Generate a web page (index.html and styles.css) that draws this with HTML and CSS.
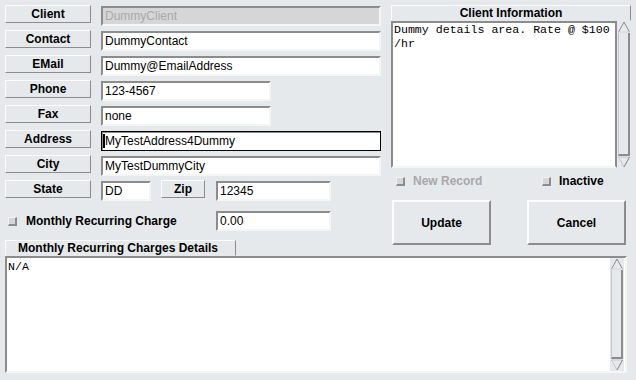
FILE: index.html
```html
<!DOCTYPE html>
<html>
<head>
<meta charset="utf-8">
<link rel="stylesheet" href="styles.css">
</head>
<body>
<div class="window">
  <div class="top">
    <div class="form">
      <div class="row"><div class="lbl">Client</div><div class="field w-wide disabled">DummyClient</div></div>
      <div class="row"><div class="lbl">Contact</div><div class="field w-wide">DummyContact</div></div>
      <div class="row"><div class="lbl">EMail</div><div class="field w-wide">Dummy@EmailAddress</div></div>
      <div class="row"><div class="lbl">Phone</div><div class="field w-mid">123-4567</div></div>
      <div class="row"><div class="lbl">Fax</div><div class="field w-mid">none</div></div>
      <div class="row"><div class="lbl">Address</div><div class="field w-wide focused"><span class="caret"></span>MyTestAddress4Dummy</div></div>
      <div class="row"><div class="lbl">City</div><div class="field w-wide">MyTestDummyCity</div></div>
      <div class="row"><div class="lbl">State</div><div class="field w-s">DD</div><div class="lbl zip">Zip</div><div class="field w-z zipf">12345</div></div>
      <div class="mrow">
        <span class="check"></span><span class="clabel">Monthly Recurring Charge</span>
        <div class="field w-z mfield">0.00</div>
      </div>
      <div class="tab">Monthly Recurring Charges Details</div>
    </div>
    <div class="side">
      <div class="info-title">Client Information</div>
      <div class="info-body">
        <div class="ta mono">Dummy details area. Rate @ $100
/hr</div>
        <div class="sb">
          <svg class="arr" width="14" height="12" viewBox="0 0 14 12"><path d="M1.5 11 L7 1 L12.5 11 Z" fill="#e6e9eb" stroke="#8c8c8c" stroke-width="1"/><path d="M1.5 11 H12.5" stroke="#fff" stroke-width="1"/></svg>
          <div class="trough"></div>
          <svg class="arr" width="14" height="12" viewBox="0 0 14 12"><path d="M1.5 1 L7 11 L12.5 1 Z" fill="#e6e9eb" stroke="#c4c8ca" stroke-width="1"/><path d="M7 11 L12.5 1" stroke="#8c8c8c" stroke-width="1"/></svg>
        </div>
      </div>
      <div class="checks">
        <span class="citem first"><span class="check"></span><span class="clabel dim">New Record</span></span>
        <span class="citem"><span class="check"></span><span class="clabel">Inactive</span></span>
      </div>
      <div class="btns">
        <div class="btn">Update</div>
        <div class="btn">Cancel</div>
      </div>
    </div>
  </div>
  <div class="details">
    <div class="ta2 mono">N/A</div>
    <div class="sb">
      <svg class="arr" width="14" height="12" viewBox="0 0 14 12"><path d="M1.5 11 L7 1 L12.5 11 Z" fill="#e6e9eb" stroke="#8c8c8c" stroke-width="1"/><path d="M1.5 11 H12.5" stroke="#fff" stroke-width="1"/></svg>
      <div class="trough"></div>
      <svg class="arr" width="14" height="12" viewBox="0 0 14 12"><path d="M1.5 1 L7 11 L12.5 1 Z" fill="#e6e9eb" stroke="#c4c8ca" stroke-width="1"/><path d="M7 11 L12.5 1" stroke="#8c8c8c" stroke-width="1"/></svg>
    </div>
  </div>
</div>
</body>
</html>
```
FILE: styles.css
```css
html, body {
  margin: 0;
  background: #e6e9eb;
}
body {
  font-family: "Liberation Sans", Arial, sans-serif;
  font-size: 12px;
  color: #000;
}
.window {
  width: 636px;
  height: 380px;
  box-sizing: border-box;
  padding: 5px 0 0 5px;
  overflow: hidden;
}
.top {
  display: grid;
  grid-template-columns: 376px 240px;
  column-gap: 10px;
  align-items: start;
}
.form {
  display: flex;
  flex-direction: column;
}
.row {
  display: flex;
  align-items: flex-start;
  gap: 10px;
  height: 25px;
}
.lbl {
  width: 86px;
  height: 18px;
  box-sizing: border-box;
  border: 1px solid;
  border-color: #fcfcfc #8c8c8c #8c8c8c #fcfcfc;
  font-weight: bold;
  display: flex;
  align-items: center;
  justify-content: center;
  font-size: 12px;
}
.lbl.zip {
  width: 44px;
}
.field {
  margin-top: 1px;
  height: 20px;
  box-sizing: border-box;
  border: 2px solid;
  border-color: #8c8c8c #f4f5f5 #f4f5f5 #8c8c8c;
  background: #fff;
  padding: 0 2px;
  line-height: 16px;
  white-space: nowrap;
  overflow: hidden;
  position: relative;
}
.field.disabled {
  background: #d6d6d6;
  color: #a9a9a9;
}
.field.focused {
  border: 1px solid #000;
  box-shadow: inset 1px 1px 0 #8c8c8c;
  padding-left: 3px;
  line-height: 18px;
}
.caret {
  position: absolute;
  left: 1px;
  top: 2px;
  width: 2px;
  height: 14px;
  background: #000;
}
.w-wide { width: 280px; }
.w-mid { width: 170px; }
.w-s { width: 50px; }
.w-z { width: 115px; }
.zipf { margin-left: 1px; }
.mrow {
  display: flex;
  align-items: center;
  height: 20px;
  margin-top: 6px;
}
.mrow .check {
  margin-left: 3px;
}
.mrow .clabel {
  margin-left: 9px;
  width: 190px;
  flex: none;
}
.mfield {
  margin-top: 0;
  margin-left: 0;
}
.check {
  display: inline-block;
  flex: none;
  width: 9px;
  height: 9px;
  box-sizing: border-box;
  border: 1px solid;
  border-color: #f2f2f2 #8c8c8c #8c8c8c #f2f2f2;
  border-width: 1px 2px 2px 1px;
  background: #d4d6d7;
}
.clabel {
  font-weight: bold;
  white-space: nowrap;
}
.clabel.dim {
  color: #a8a8a8;
}
.tab {
  margin-top: 9px;
  width: 231px;
  height: 16px;
  box-sizing: border-box;
  border: 1px solid;
  border-color: #fcfcfc #8c8c8c transparent #fcfcfc;
  font-weight: bold;
  padding-left: 12px;
  line-height: 15px;
}
.side {
  display: flex;
  flex-direction: column;
}
.info-title {
  height: 16px;
  box-sizing: border-box;
  border: 1px solid;
  border-color: #fcfcfc #8c8c8c transparent #fcfcfc;
  text-align: center;
  font-weight: bold;
  line-height: 15px;
}
.info-body {
  display: flex;
  height: 147px;
  width: 240px;
}
.mono {
  font-family: "Liberation Mono", "Courier New", monospace;
  font-size: 11.6px;
  white-space: pre;
}
.ta {
  flex: 1;
  box-sizing: border-box;
  border: 2px solid;
  border-color: #8c8c8c #8c8c8c #f4f5f5 #8c8c8c;
  background: #fff;
  padding: 0 1px;
  line-height: 14px;
}
.sb {
  width: 14px;
  display: flex;
  flex-direction: column;
  box-sizing: border-box;
}
.arr {
  display: block;
  flex: none;
}
.trough {
  flex: 1;
  margin: 0 1px 0 1px;
  border-left: 1px solid #c4c8ca;
  border-right: 2px solid #8c8c8c;
  border-bottom: 2px solid #8c8c8c;
}
.checks {
  height: 32px;
  box-sizing: border-box;
  padding-top: 6px;
  display: flex;
  align-items: flex-start;
}
.citem {
  display: flex;
  align-items: center;
  flex: none;
  height: 14px;
}
.citem .clabel {
  margin-left: 8px;
}
.citem.first {
  margin-left: 5px;
  width: 146px;
}
.btns {
  display: flex;
  justify-content: space-between;
  padding: 0 5px 0 1px;
}
.btn {
  width: 99px;
  height: 45px;
  box-sizing: border-box;
  border: 2px solid;
  border-color: #fcfcfc #8c8c8c #8c8c8c #fcfcfc;
  font-weight: bold;
  display: flex;
  align-items: center;
  justify-content: center;
}
.details {
  display: flex;
  width: 622px;
  height: 117px;
  box-sizing: border-box;
  border: 2px solid;
  border-color: #8c8c8c #f4f5f5 #f4f5f5 #8c8c8c;
  background: #fff;
  padding-right: 1px;
}
.ta2 {
  flex: 1;
  padding: 2px 1px;
  line-height: 14px;
}
.details .sb {
  background: #e6e9eb;
}
```
